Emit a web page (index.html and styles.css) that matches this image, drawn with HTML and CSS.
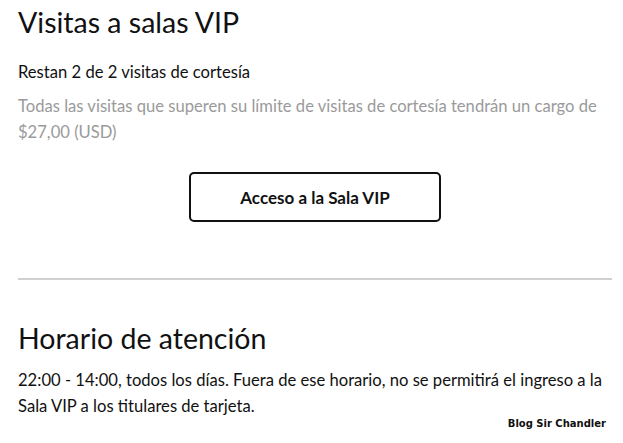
FILE: index.html
```html
<!DOCTYPE html>
<html lang="es">

<head>
  <meta charset="UTF-8" />
  <meta name="viewport" content="width=device-width, initial-scale=1.0" />
  <title>Visitas a salas VIP</title>
  <link rel="stylesheet" href="styles.css">
</head>

<body>
  <div id="content">
    <section class="lounge">
      <h1>Visitas a salas VIP</h1>
      <p class="remaining">Restan 2 de 2 visitas de cortesía</p>
      <p class="note">
        Todas las visitas que superen su límite de visitas de cortesía tendrán un cargo de
        $27,00 (USD)
      </p>
      <div class="actions">
        <button type="button">Acceso a la Sala VIP</button>
      </div>
    </section>
    <hr />
    <section class="hours">
      <h1>Horario de atención</h1>
      <p>
        22:00 - 14:00, todos los días. Fuera de ese horario, no se permitirá el ingreso a la
        Sala VIP a los titulares de tarjeta.
      </p>
    </section>
  </div>
  <div class="watermark">Blog Sir Chandler</div>
</body>

</html>
```

FILE: styles.css
```css
body {
  font-family: 'Lato', sans-serif;
  margin: 0;
  padding: 0;
  background-color: #fff;
  color: #111;
}

#content {
  padding: 0 11px 0 18px;
}

h1 {
  font-size: 28.5px;
  font-weight: 400;
  margin: 0;
  line-height: 44px;
}

.remaining {
  font-size: 16.6px;
  margin: 17px 0 0;
  line-height: 22px;
}

.note {
  color: #9a9a9a;
  font-size: 16.6px;
  line-height: 26px;
  margin: 10px 0 0;
}

.actions {
  display: flex;
  justify-content: center;
  margin-top: 27px;
}

.actions button {
  font-family: 'Lato', sans-serif;
  font-size: 17px;
  font-weight: 700;
  color: #111;
  background-color: #fff;
  border: 2px solid #111;
  border-radius: 5px;
  width: 252px;
  height: 50px;
  cursor: pointer;
}

hr {
  border: none;
  border-top: 2px solid #d0d0d0;
  margin: 56px 0 0;
}

.hours h1 {
  margin-top: 36px;
}

.hours p {
  font-size: 16.6px;
  line-height: 26px;
  margin: 7px 0 0;
}

.watermark {
  font-family: 'DejaVu Sans', sans-serif;
  font-weight: 700;
  font-size: 10px;
  text-align: right;
  padding-right: 17px;
  margin-top: -1px;
}
```
